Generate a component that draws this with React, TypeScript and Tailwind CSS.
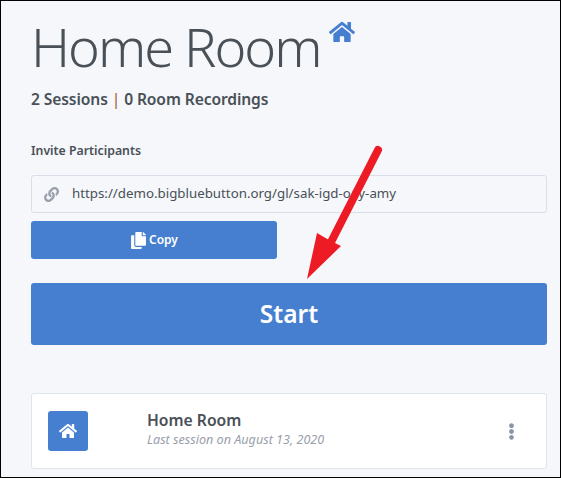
import { FaHome, FaLink, FaCopy, FaEllipsisV } from "react-icons/fa";

export default function App() {
  return (
    <div className="relative h-[478px] w-[561px] overflow-hidden border border-black bg-[#f5f7fb] font-['Noto_Sans',sans-serif] text-[#495057]">
      <div className="flex h-full flex-col pl-[30px] pr-[13px]">
        <div className="mt-[9px] flex items-start">
          <h1 className="text-[54px] leading-[72px] font-[350] tracking-[-2px] text-[#495057]">Home Room</h1>
          <FaHome className="mt-[9px] ml-[9px] text-[26px] text-[#467fcf]" />
        </div>
        <p className="mt-[5px] text-[15.6px] leading-6 font-semibold tracking-[-0.1px] text-[#495057]">
          2 Sessions <span className="font-normal text-[#a5532f]">|</span> 0 Room Recordings
        </p>
        <label className="mt-[30px] text-[12.3px] leading-[20px] font-semibold text-[#495057]">Invite Participants</label>
        <div className="mt-[14px] flex h-[38px] items-center rounded-[3px] border border-[#d9dfe8] bg-[#f5f7fb]">
          <FaLink className="ml-[12px] text-[15px] text-[#9aa0ac]" />
          <span className="ml-[13px] text-[13.3px] text-[#495057]">https://demo.bigbluebutton.org/gl/sak-igd-oay-amy</span>
        </div>
        <button className="mt-[8px] flex h-[38px] w-[246px] items-center justify-center gap-[2px] rounded-[3px] bg-[#467fcf] text-[12px] font-semibold text-white">
          <FaCopy className="text-[17px]" />
          Copy
        </button>
        <button className="mt-[24px] h-[62px] w-full rounded-[3px] bg-[#467fcf] text-[24.5px] font-semibold text-white">Start</button>
        <div className="mt-[48px] flex h-[76px] items-center rounded-[3px] border border-[#e0e5ec] bg-white pl-[16px] pr-[26px]">
          <div className="flex h-10 w-10 items-center justify-center rounded-[3px] bg-[#467fcf] text-[18px] text-white">
            <FaHome />
          </div>
          <div className="ml-[59px] flex-1 pb-[3px]">
            <div className="text-[15.7px] leading-[21px] font-semibold text-[#495057]">Home Room</div>
            <div className="text-[12.6px] leading-[18px] text-[#9aa0ac] italic">Last session on August 13, 2020</div>
          </div>
          <FaEllipsisV className="text-[17px] text-[#8b95a5]" />
        </div>
      </div>
      <svg className="absolute left-[300px] top-[140px] h-[145px] w-[90px]" viewBox="0 0 90 145">
        <path d="M77 9 L27 107" stroke="#ed1c24" strokeWidth="8" strokeLinecap="round" fill="none" />
        <path d="M6 138 L16 92 L28 99 L40 105 Z" fill="#ed1c24" />
      </svg>
    </div>
  );
}
